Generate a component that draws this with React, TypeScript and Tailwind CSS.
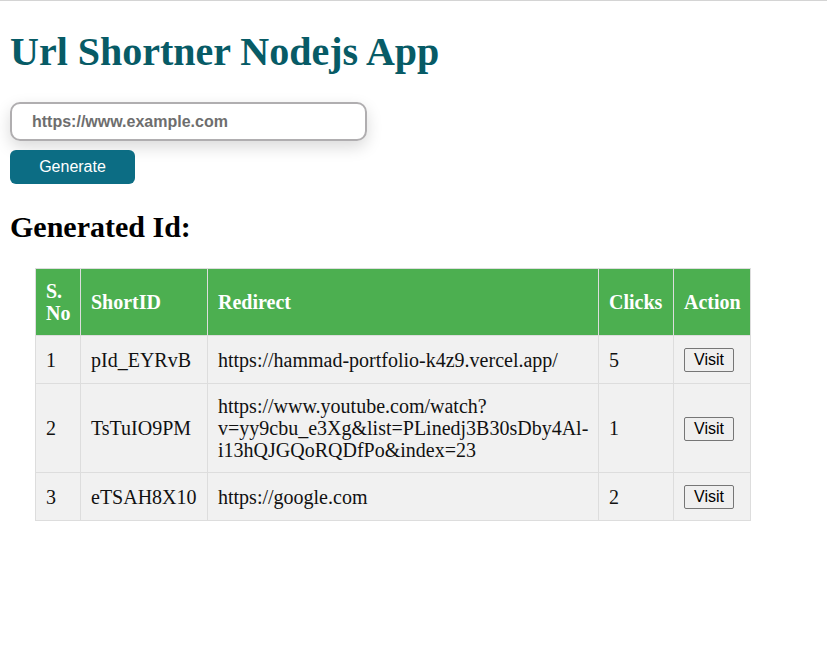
const rows = [
  { id: "pId_EYRvB", url: "https://hammad-portfolio-k4z9.vercel.app/", clicks: 5 },
  {
    id: "TsTuIO9PM",
    url: "https://www.youtube.com/watch?v=yy9cbu_e3Xg&list=PLinedj3B30sDby4Al-i13hQJGQoRQDfPo&index=23",
    clicks: 1,
  },
  { id: "eTSAH8X10", url: "https://google.com", clicks: 2 },
];

export default function App() {
  return (
    <div className="min-h-screen bg-white border-t border-[#d4d4d4] px-[10px] font-['Liberation_Serif',serif]">
      <h1 className="pt-[24px] text-[40px] leading-[54px] font-bold text-[#075b66]">
        Url Shortner Nodejs App
      </h1>

      <div className="mt-[23px] flex flex-col items-start gap-[9px]">
        <input
          type="text"
          placeholder="https://www.example.com"
          className="w-[357px] h-[39px] rounded-[10px] border-2 border-[#b0aeb0] pl-[20px] font-['Liberation_Sans',sans-serif] text-[16px] font-bold text-[#555] placeholder:text-[#6e6e6e] shadow-[0_6px_16px_rgba(0,0,0,0.15)] outline-none"
        />
        <button className="w-[125px] h-[34px] rounded-[6px] bg-[#0c6d84] font-['Liberation_Sans',sans-serif] text-[16px] text-white">
          Generate
        </button>
      </div>

      <h2 className="mt-[24px] text-[30px] leading-[38px] font-bold text-black">Generated Id:</h2>

      <table className="ml-[25px] mt-[22px] w-[715px] table-fixed border-collapse text-[20px] leading-[22px]">
        <thead>
          <tr className="bg-[#4caf50] text-white text-left">
            <th className="w-[45px] border border-[#dddddd] px-[10px] py-[11px] font-bold">S. No</th>
            <th className="w-[127px] border border-[#dddddd] px-[10px] py-[11px] font-bold">ShortID</th>
            <th className="w-[391px] border border-[#dddddd] px-[10px] py-[11px] font-bold">Redirect</th>
            <th className="w-[75px] border border-[#dddddd] px-[10px] py-[11px] font-bold">Clicks</th>
            <th className="w-[77px] border border-[#dddddd] px-[10px] py-[11px] font-bold">Action</th>
          </tr>
        </thead>
        <tbody>
          {rows.map((r, i) => (
            <tr key={r.id} className="bg-[#f1f1f1] text-[#111]">
              <td className="border border-[#dddddd] px-[10px] py-[11px]">{i + 1}</td>
              <td className="border border-[#dddddd] px-[10px] py-[11px]">{r.id}</td>
              <td className="border border-[#dddddd] pl-[10px] pr-[6px] py-[11px] break-words">{r.url}</td>
              <td className="border border-[#dddddd] px-[10px] py-[11px]">{r.clicks}</td>
              <td className="border border-[#dddddd] py-[11px] px-[10px]">
                <button className="h-[24px] rounded-[2px] border border-[#767676] bg-[#efefef] px-[9px] font-['Liberation_Sans',sans-serif] text-[16px] leading-[20px] text-black">
                  Visit
                </button>
              </td>
            </tr>
          ))}
        </tbody>
      </table>
    </div>
  );
}
